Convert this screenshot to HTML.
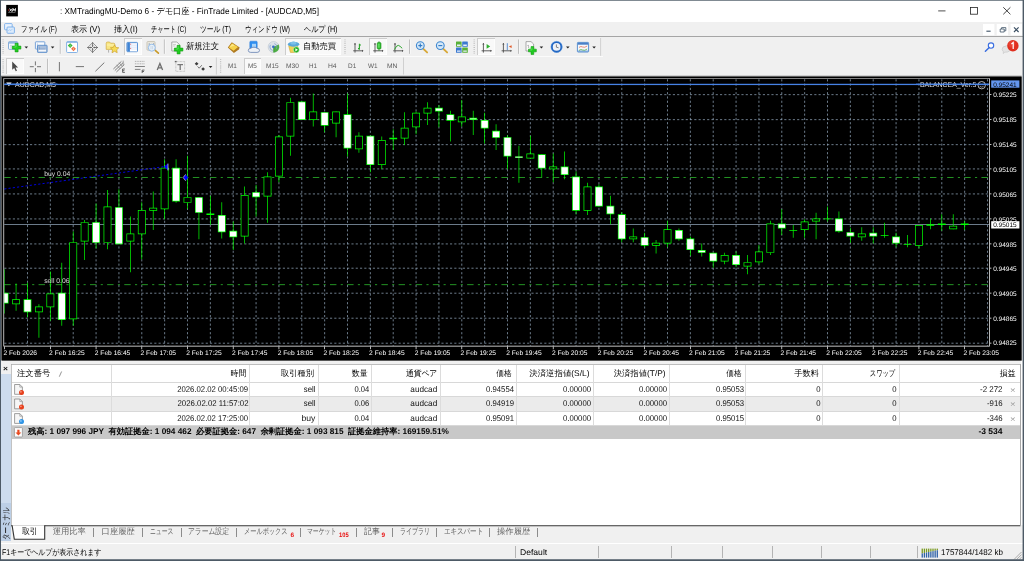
<!DOCTYPE html>
<html lang="ja"><head><meta charset="utf-8"><title>MT4</title>
<style>
html,body{margin:0;padding:0}
body{width:1024px;height:561px;overflow:hidden;position:relative;background:#f0f0f0;font-family:"Liberation Sans",sans-serif;text-rendering:geometricPrecision}
.t{position:absolute;white-space:nowrap;display:block}
.t i{display:inline-block;width:1em;text-align:center;font-style:normal;overflow:visible}
.b{position:absolute}
svg{position:absolute;left:0;top:0;overflow:visible}
#root{position:absolute;left:0;top:0;width:1024px;height:561px;overflow:hidden;will-change:transform}
svg text{font-family:"Liberation Sans",sans-serif;text-rendering:geometricPrecision}
</style></head><body><div id="root">
<div class="b" style="left:0.00px;top:0.00px;width:1024.00px;height:22.20px;background:#fff;"></div>
<div class="b" style="left:0.00px;top:22.20px;width:1024.00px;height:14.20px;background:#f0f0f0;"></div>
<div class="b" style="left:0.00px;top:36.20px;width:1024.00px;height:0.80px;background:#a5a5a5;"></div>
<div class="b" style="left:0.00px;top:37.00px;width:1024.00px;height:38.80px;background:#f0f0f0;"></div>
<div class="b" style="left:0.00px;top:55.90px;width:603.00px;height:0.70px;background:#fbfbfb;"></div>
<div class="b" style="left:0.00px;top:75.00px;width:1024.00px;height:0.70px;background:#fdfdfd;"></div>
<span class="t" id="t1" style="font-size:8.57px;color:#000;top:6.26px;line-height:10.28px;left:59.60px;transform-origin:0 50%;transform:scaleX(0.964);">: XMTradingMU-Demo 6 - <i>デ</i><i>モ</i><i>口</i><i>座</i> - FinTrade Limited - [AUDCAD,M5]</span>
<span class="t" id="t2" style="font-size:8.57px;color:#000;top:23.86px;line-height:10.28px;left:20.60px;transform-origin:0 50%;transform:scaleX(0.755);"><i>フ</i><i>ァ</i><i>イ</i><i>ル</i> (F)</span>
<span class="t" id="t3" style="font-size:8.57px;color:#000;top:23.86px;line-height:10.28px;left:70.60px;transform-origin:0 50%;transform:scaleX(0.944);"><i>表</i><i>示</i> (V)</span>
<span class="t" id="t4" style="font-size:8.57px;color:#000;top:23.86px;line-height:10.28px;left:113.80px;transform-origin:0 50%;transform:scaleX(0.936);"><i>挿</i><i>入</i>(I)</span>
<span class="t" id="t5" style="font-size:8.57px;color:#000;top:23.86px;line-height:10.28px;left:151.30px;transform-origin:0 50%;transform:scaleX(0.726);"><i>チ</i><i>ャ</i><i>ー</i><i>ト</i> (C)</span>
<span class="t" id="t6" style="font-size:8.57px;color:#000;top:23.86px;line-height:10.28px;left:200.00px;transform-origin:0 50%;transform:scaleX(0.795);"><i>ツ</i><i>ー</i><i>ル</i> (T)</span>
<span class="t" id="t7" style="font-size:8.57px;color:#000;top:23.86px;line-height:10.28px;left:245.00px;transform-origin:0 50%;transform:scaleX(0.763);"><i>ウ</i><i>ィ</i><i>ン</i><i>ド</i><i>ウ</i> (W)</span>
<span class="t" id="t8" style="font-size:8.57px;color:#000;top:23.86px;line-height:10.28px;left:304.00px;transform-origin:0 50%;transform:scaleX(0.838);"><i>ヘ</i><i>ル</i><i>プ</i> (H)</span>
<div class="b" style="left:123.60px;top:38.30px;width:18.00px;height:16.30px;background:#f9f9f9;box-shadow:inset 1px 1px 0 #cdcdcd, inset -0.7px -0.7px 0 #fff;"></div>
<div class="b" style="left:285.00px;top:38.30px;width:55.90px;height:16.50px;background:#f9f9f9;box-shadow:inset 1px 1px 0 #cdcdcd, inset -0.7px -0.7px 0 #fff;"></div>
<div class="b" style="left:368.60px;top:38.30px;width:18.00px;height:16.30px;background:#f9f9f9;box-shadow:inset 1px 1px 0 #cdcdcd, inset -0.7px -0.7px 0 #fff;"></div>
<div class="b" style="left:477.40px;top:38.30px;width:17.80px;height:16.30px;background:#f9f9f9;box-shadow:inset 1px 1px 0 #cdcdcd, inset -0.7px -0.7px 0 #fff;"></div>
<div class="b" style="left:6.10px;top:57.80px;width:18.00px;height:16.40px;background:#f9f9f9;box-shadow:inset 1px 1px 0 #cdcdcd, inset -0.7px -0.7px 0 #fff;"></div>
<div class="b" style="left:243.60px;top:58.20px;width:17.70px;height:16.00px;background:#f9f9f9;box-shadow:inset 1px 1px 0 #cdcdcd, inset -0.7px -0.7px 0 #fff;"></div>
<span class="t" id="t9" style="font-size:8.57px;color:#000;top:41.16px;line-height:10.28px;left:185.70px;transform-origin:0 50%;transform:scaleX(0.964);"><i>新</i><i>規</i><i>注</i><i>文</i></span>
<span class="t" id="t10" style="font-size:8.57px;color:#000;top:41.26px;line-height:10.28px;left:303.00px;transform-origin:0 50%;transform:scaleX(0.964);"><i>自</i><i>動</i><i>売</i><i>買</i></span>
<span class="t" id="t11" style="font-size:6.5px;color:#5a5a5a;top:62.70px;line-height:7.80px;left:227.60px;transform-origin:0 50%;transform:scaleX(0.985);">M1</span>
<span class="t" id="t12" style="font-size:6.5px;color:#5a5a5a;top:62.70px;line-height:7.80px;left:247.90px;transform-origin:0 50%;transform:scaleX(0.985);">M5</span>
<span class="t" id="t13" style="font-size:6.5px;color:#5a5a5a;top:62.70px;line-height:7.80px;left:266.00px;transform-origin:0 50%;">M15</span>
<span class="t" id="t14" style="font-size:6.5px;color:#5a5a5a;top:62.70px;line-height:7.80px;left:285.90px;transform-origin:0 50%;transform:scaleX(1.019);">M30</span>
<span class="t" id="t15" style="font-size:6.5px;color:#5a5a5a;top:62.70px;line-height:7.80px;left:308.50px;transform-origin:0 50%;transform:scaleX(0.962);">H1</span>
<span class="t" id="t16" style="font-size:6.5px;color:#5a5a5a;top:62.70px;line-height:7.80px;left:327.80px;transform-origin:0 50%;transform:scaleX(1.035);">H4</span>
<span class="t" id="t17" style="font-size:6.5px;color:#5a5a5a;top:62.70px;line-height:7.80px;left:347.90px;transform-origin:0 50%;transform:scaleX(0.986);">D1</span>
<span class="t" id="t18" style="font-size:6.5px;color:#5a5a5a;top:62.70px;line-height:7.80px;left:368.20px;transform-origin:0 50%;transform:scaleX(0.985);">W1</span>
<span class="t" id="t19" style="font-size:6.5px;color:#5a5a5a;top:62.70px;line-height:7.80px;left:387.00px;transform-origin:0 50%;transform:scaleX(1.029);">MN</span>
<svg width="1024" height="80" viewBox="0 0 1024 80">
<rect x="6.2" y="4.9" width="11.7" height="11.5" fill="#000"/>
<path d="M9.6 8.5l2 3M12.3 8.5l-3 3M12.4 11.5l0.7-3l0.9 2.1l1.5-2.1l-0.3 3" stroke="#f4f4f4" stroke-width="0.95" fill="none" stroke-linejoin="round"/><path d="M8 9.2l1.1 0.8l-1.1 0.9z" fill="#e02020"/><rect x="8.2" y="12.2" width="7.2" height="0.6" fill="#9a9a9a"/>
<path d="M938.2 10.9h7.3" stroke="#222" stroke-width="0.8"/>
<rect x="970.5" y="7.4" width="7" height="6.8" fill="none" stroke="#222" stroke-width="0.8"/>
<path d="M1003.3 7.3l7.1 7M1010.4 7.3l-7.1 7" stroke="#222" stroke-width="0.85"/>
<rect x="983" y="24" width="11.4" height="11.2" fill="#fff"/>
<rect x="996.7" y="24" width="11.4" height="11.2" fill="#fff"/>
<rect x="1010.6" y="24" width="11.4" height="11.2" fill="#fff"/>
<path d="M986.4 31.2h4.2" stroke="#3c5064" stroke-width="1.1"/>
<path d="M1000.2 29h4v3h-4zM1001.6 29v-1.4h4.2v3.2h-1.4" stroke="#3c5064" stroke-width="0.8" fill="none"/>
<path d="M1014 27.4l4.6 4.6M1018.6 27.4l-4.6 4.6" stroke="#3c5064" stroke-width="1.2"/>
<rect x="4.6" y="23.6" width="7.6" height="6.2" rx="0.8" fill="#eaf3fd" stroke="#6aa5e8" stroke-width="0.8"/><rect x="7" y="27" width="7.4" height="6.3" rx="0.8" fill="#dcebfb" stroke="#6aa5e8" stroke-width="0.8"/><path d="M8.2 31l1.4-1.4l1.2 1l1.8-1.8" stroke="#8ab8ee" stroke-width="0.6" fill="none"/>
<path d="M3.1 39.5V54" stroke="#b8b8b8" stroke-width="1.3" stroke-dasharray="0.8 1.1"/>
<path d="M3.1 59V73" stroke="#b8b8b8" stroke-width="1.3" stroke-dasharray="0.8 1.1"/>
<path d="M345 39.5V54" stroke="#b8b8b8" stroke-width="1.3" stroke-dasharray="0.8 1.1"/>
<path d="M474.2 39.5V54" stroke="#b8b8b8" stroke-width="1.3" stroke-dasharray="0.8 1.1"/>
<path d="M220.6 59V73" stroke="#b8b8b8" stroke-width="1.3" stroke-dasharray="0.8 1.1"/>
<path d="M60.3 39.5V53.8" stroke="#a8a8a8" stroke-width="0.8"/><path d="M61.099999999999994 39.5V53.8" stroke="#fff" stroke-width="0.6"/>
<path d="M164.4 39.5V53.8" stroke="#a8a8a8" stroke-width="0.8"/><path d="M165.20000000000002 39.5V53.8" stroke="#fff" stroke-width="0.6"/>
<path d="M409.5 39.5V53.8" stroke="#a8a8a8" stroke-width="0.8"/><path d="M410.3 39.5V53.8" stroke="#fff" stroke-width="0.6"/>
<path d="M518.5 39.5V53.8" stroke="#a8a8a8" stroke-width="0.8"/><path d="M519.3 39.5V53.8" stroke="#fff" stroke-width="0.6"/>
<path d="M47.6 58.8V73.4" stroke="#a8a8a8" stroke-width="0.8"/><path d="M48.4 58.8V73.4" stroke="#fff" stroke-width="0.6"/>
<path d="M600.6 38v17.8" stroke="#c8c8c8" stroke-width="0.8"/><path d="M216.4 57.5v17" stroke="#c8c8c8" stroke-width="0.8"/><path d="M403.5 57.5v17" stroke="#c8c8c8" stroke-width="0.8"/>
<rect x="8.5" y="41.7" width="9.2" height="7.6" rx="0.8" fill="#f4f8fc" stroke="#6a9ad0" stroke-width="0.8"/><rect x="8.9" y="42.1" width="8.4" height="1.5" fill="#8ab4e2"/><path d="M10 45.4h2.4M10 47h2.4" stroke="#9ab0c8" stroke-width="0.5"/>
<path d="M15.100000000000001 43.300000000000004h3.0v2.8h2.8v3.0h-2.8v2.8h-3.0v-2.8h-2.8v-3.0h2.8z" fill="#1fcc1f" stroke="#0f9a0f" stroke-width="0.6"/><path d="M16.1 44.2v2.8h-2.4" stroke="#8cf08c" stroke-width="0.6" fill="none" opacity="0.8"/>
<path d="M24.5 46.4h3.6l-1.8 2.1z" fill="#222"/>
<rect x="35.4" y="41.8" width="9.4" height="7.2" rx="0.5" fill="#fafcfe" stroke="#5a8fd0" stroke-width="0.8"/><path d="M37.4 43.4v4.6M36.8 47h6.2" stroke="#7a9cc8" stroke-width="0.5" fill="none"/><rect x="37.5" y="45.3" width="9.6" height="7.1" rx="0.5" fill="#a9bfdc" stroke="#4f86c8" stroke-width="0.8"/><rect x="38.6" y="49.6" width="7.4" height="1.9" fill="#f4f7fb"/><path d="M39.4 46.6v3M39 49h6.4" stroke="#6f8fb8" stroke-width="0.5" fill="none"/>
<path d="M50.8 46.4h3.6l-1.8 2.1z" fill="#222"/>
<rect x="66.6" y="41.7" width="10.9" height="10.8" rx="0.9" fill="#fff" stroke="#78aae2" stroke-width="0.9"/><path d="M66.8 42.2h10.5" stroke="#6aa0e0" stroke-width="0.9"/><path d="M70.2 43.2l2.4 2.4l-2.4 2.4l-2.4-2.4z" fill="#35b835"/><path d="M73.5 46.4l2.4 2.4l-2.4 2.4l-2.4-2.4z" fill="#f07040"/><path d="M70.2 44.6v2M73.5 47.8v2" stroke="#fff" stroke-width="0.5" opacity="0.8"/>
<path d="M92.6 42.6l4.9 4.9l-4.9 4.9l-4.9-4.9z" fill="none" stroke="#6e6e6e" stroke-width="0.7"/><path d="M92.6 42.2v4.3M92.6 48.5v4.3M87.3 47.5h4.3M93.6 47.5h4.3" stroke="#5a5a5a" stroke-width="0.8"/><path d="M92.6 46.9l-0.9-1.5h1.8zM92.6 48.1l-0.9 1.5h1.8zM92 47.5l-1.5-0.9v1.8zM93.2 47.5l1.5-0.9v1.8z" fill="#5a5a5a"/>
<path d="M106.2 43.4q0-1.4 1.4-1.4h2l1 1.2h3q1.2 0 1.2 1.2v5h-8.6z" fill="#f8e684" stroke="#c8a030" stroke-width="0.6"/><path d="M106.8 45h7.4" stroke="#fdf6c0" stroke-width="0.8"/><path d="M108.6 50v2.6" stroke="#b0b0b0" stroke-width="1"/>
<path d="M114.6 44.8l1.3 2.6l2.9 0.4l-2.1 2l0.5 2.9l-2.6-1.4l-2.6 1.4l0.5-2.9l-2.1-2l2.9-0.4z" fill="#f6dc58" stroke="#c89820" stroke-width="0.6"/>
<rect x="126.9" y="42.4" width="10.6" height="9.3" rx="0.7" fill="#e6ecfa" stroke="#4a88d0" stroke-width="0.9"/><rect x="130" y="49.6" width="7" height="1.7" fill="#fff"/><rect x="127.3" y="42.8" width="2.6" height="8.5" fill="#3f84d4"/><path d="M130.2 44.2h0.9M130.2 48.4h0.9" stroke="#e04040" stroke-width="0.8"/><path d="M131.6 44.4h5M131.6 46.4h5M131.6 48.4h5" stroke="#fff" stroke-width="0.5"/>
<rect x="147" y="41.6" width="8" height="8.6" rx="0.8" fill="#eeebe2" stroke="#b8b2a0" stroke-width="0.7"/><path d="M149.2 43.2v2M153.6 43.2v2" stroke="#7890b0" stroke-width="0.8"/><path d="M155.2 50.3l3.2 2.9" stroke="#c89a28" stroke-width="1.6" stroke-linecap="round"/><circle cx="151.8" cy="47.7" r="3.5" fill="#e6f1fb" fill-opacity="0.92" stroke="#8fb8e8" stroke-width="0.9"/><path d="M151 46v3.2M152.6 46v3.2" stroke="#b8c8d8" stroke-width="0.6"/>
<path d="M171.8 42h5l2.6 2.4v6.6h-7.6z" fill="#fafafa" stroke="#8a8a8a" stroke-width="0.7"/><path d="M173 44.4h3M173 46h2.4" stroke="#aaa" stroke-width="0.6"/>
<path d="M177.1 45.300000000000004h3.0v2.8h2.8v3.0h-2.8v2.8h-3.0v-2.8h-2.8v-3.0h2.8z" fill="#1fcc1f" stroke="#0f9a0f" stroke-width="0.6"/><path d="M178.1 46.2v2.8h-2.4" stroke="#8cf08c" stroke-width="0.6" fill="none" opacity="0.8"/>
<path d="M227.8 47.6l4-5.4l7.9 5.2l-0.9 2.2l-4.9 3.5z" fill="#b07a20"/><path d="M228.8 47.4l3.2-4.2l6 3.9l-4.4 3.6z" fill="#f6d24a"/><path d="M229.6 47.2l2.6-3.2l2.4 1.6z" fill="#fbe88a"/>
<rect x="249.8" y="41.2" width="7.4" height="7.2" rx="0.9" fill="#2f8ef0" stroke="#2a78d8" stroke-width="0.5"/><rect x="252" y="43.8" width="4" height="3.2" fill="#a8d4fa"/>
<path d="M248.3 50.4q0-2.2 2.6-2.1q1-1.3 3-1.1q2-0.2 3 1.1q2.6-0.1 2.6 2.1q0 2-2.4 2h-6.4q-2.4 0-2.4-2z" fill="#eef1f6" stroke="#6480b0" stroke-width="0.8"/>
<circle cx="273.6" cy="47" r="5.5" fill="#dde3ea" stroke="#b4bec8" stroke-width="0.5"/><path d="M273.6 47L278.6 44.6A5.5 5.5 0 0 1 273.6 52.5z" fill="#4fb044"/><path d="M273.9 47v5.4" stroke="#3f9c38" stroke-width="1"/><circle cx="273.4" cy="47" r="3.5" fill="none" stroke="#7a9acc" stroke-width="0.7" stroke-dasharray="7 4" stroke-dashoffset="-6"/><circle cx="273.4" cy="46.8" r="1.4" fill="#3a6ec0"/>
<path d="M288.6 45.6h9.2l-1 6.8h-6.4z" fill="#f2d454" stroke="#c0982a" stroke-width="0.5"/><ellipse cx="293.6" cy="44.2" rx="5.7" ry="2.5" fill="#5aa8dc"/><ellipse cx="293.4" cy="43" rx="3" ry="1.6" fill="#7cc0ea"/><circle cx="296.3" cy="49.8" r="3" fill="#22b022" stroke="#e8f8e8" stroke-width="0.5"/><path d="M295.4 48.2l2.5 1.6l-2.5 1.6z" fill="#fff"/>
<path d="M355.0 43.2v9.4M353.2 50.800000000000004h9.8" stroke="#505050" stroke-width="0.9" fill="none"/><path d="M353.9 44.400000000000006l1.1-1.5l1.1 1.5zM362.0 49.7l1.5 1.1l-1.5 1.1z" fill="#505050"/>
<path d="M359.4 43.8v6M358 48.6h1.4M359.4 45h1.6" stroke="#2aa52a" stroke-width="1.1"/>
<path d="M375.0 43.2v9.4M373.2 50.800000000000004h9.8" stroke="#505050" stroke-width="0.9" fill="none"/><path d="M373.9 44.400000000000006l1.1-1.5l1.1 1.5zM382.0 49.7l1.5 1.1l-1.5 1.1z" fill="#505050"/>
<path d="M379 41.2v9.6" stroke="#1d8a1d" stroke-width="0.7"/><rect x="377.2" y="42.6" width="3.8" height="6.4" rx="0.9" fill="#2fbe2f" stroke="#1d8a1d" stroke-width="0.6"/><rect x="378.2" y="43.6" width="1.4" height="4.2" rx="0.6" fill="#66e066"/>
<path d="M395.0 43.2v9.4M393.2 50.800000000000004h9.8" stroke="#505050" stroke-width="0.9" fill="none"/><path d="M393.9 44.400000000000006l1.1-1.5l1.1 1.5zM402.0 49.7l1.5 1.1l-1.5 1.1z" fill="#505050"/>
<path d="M394.4 49.6q2.4-4.8 4-4.2q1.6 0.5 3.8 2.9" stroke="#2aa52a" stroke-width="1" fill="none"/>
<path d="M423.1 48.6l4 3.8" stroke="#d8a838" stroke-width="1.9" stroke-linecap="round"/><circle cx="420.3" cy="45.6" r="3.9" fill="#d4e8f8" stroke="#3f88d0" stroke-width="1.1"/><path d="M418.3 45.6h4" stroke="#2f78c4" stroke-width="1.1"/>
<path d="M420.3 43.6v4" stroke="#2f78c4" stroke-width="1.1"/>
<path d="M443.1 48.6l4 3.8" stroke="#d8a838" stroke-width="1.9" stroke-linecap="round"/><circle cx="440.3" cy="45.6" r="3.9" fill="#d4e8f8" stroke="#3f88d0" stroke-width="1.1"/><path d="M438.3 45.6h4" stroke="#2f78c4" stroke-width="1.1"/>
<rect x="456" y="41.5" width="5.6" height="5.3" rx="0.5" fill="#58b038"/><rect x="462.2" y="41.5" width="5.6" height="5.3" rx="0.5" fill="#3a78d0"/><rect x="456" y="47.4" width="5.6" height="5.3" rx="0.5" fill="#3a78d0"/><rect x="462.2" y="47.4" width="5.6" height="5.3" rx="0.5" fill="#58b038"/><path d="M457 44.6h3.6v1.4h-3.6zM463.2 44.6h3.6v1.4h-3.6zM457 50.4h3.6v1.4h-3.6zM463.2 50.4h3.6v1.4h-3.6z" fill="#e8f0fa"/>
<path d="M483.40000000000003 43.2v9.4M481.6 50.800000000000004h9.8" stroke="#505050" stroke-width="0.9" fill="none"/><path d="M482.3 44.400000000000006l1.1-1.5l1.1 1.5zM490.40000000000003 49.7l1.5 1.1l-1.5 1.1z" fill="#505050"/>
<path d="M486.6 44l3.6 2.4l-3.6 2.4z" fill="#30b030"/>
<path d="M503.40000000000003 43.2v9.4M501.6 50.800000000000004h9.8" stroke="#505050" stroke-width="0.9" fill="none"/><path d="M502.3 44.400000000000006l1.1-1.5l1.1 1.5zM510.40000000000003 49.7l1.5 1.1l-1.5 1.1z" fill="#505050"/>
<path d="M507.3 43.2v7" stroke="#3a78c8" stroke-width="0.8"/><path d="M511.6 45.2v2.8l-2.8-1.4z" fill="#e05828"/>
<path d="M526 41.6h5l2.6 2.4v7h-7.6z" fill="#fafafa" stroke="#8a8a8a" stroke-width="0.7"/><path d="M527.4 45.6q1.4-2 1.2 2.4" stroke="#888" stroke-width="0.6" fill="none"/>
<path d="M531.05 46.6h2.7v2.55h2.55v2.7h-2.55v2.55h-2.7v-2.55h-2.55v-2.7h2.55z" fill="#1fcc1f" stroke="#0f9a0f" stroke-width="0.6"/><path d="M531.9 47.5v2.55h-2.15" stroke="#8cf08c" stroke-width="0.6" fill="none" opacity="0.8"/>
<path d="M539.6 46.4h3.6l-1.8 2.1z" fill="#222"/>
<circle cx="556.6" cy="46.9" r="4.8" fill="#eef2f8" stroke="#1f63c0" stroke-width="1.9"/><circle cx="556.6" cy="46.9" r="5.6" fill="none" stroke="#5a98e0" stroke-width="0.5"/><path d="M556.4 44.4v2.8l2.2 0.6" stroke="#555" stroke-width="0.7" fill="none"/>
<path d="M566 46.4h3.6l-1.8 2.1z" fill="#222"/>
<rect x="577.4" y="42.4" width="11.2" height="9.6" rx="0.7" fill="#f6f8fb" stroke="#4a86cc" stroke-width="0.9"/><rect x="577.8" y="42.8" width="10.4" height="1.9" fill="#4a80c8"/><rect x="577.8" y="50.6" width="10.4" height="1.1" fill="#6a9cd8"/><path d="M579 47.4q2-1.6 3.6-0.4q2 1 4.6-1" stroke="#e06040" stroke-width="0.7" fill="none"/><path d="M579 50.4q2-1.6 3.6-0.4q2 1 4.6-1" stroke="#40a840" stroke-width="0.7" fill="none"/>
<path d="M592.3 46.4h3.6l-1.8 2.1z" fill="#222"/>
<circle cx="991" cy="45.6" r="2.7" fill="#fff" stroke="#3a6ee0" stroke-width="1.1"/><path d="M989 47.8l-3.6 3.4" stroke="#3a6ee0" stroke-width="1.5" stroke-linecap="round"/>
<path d="M1003 47q3.6-2.6 7.4 0.4q1.4 3-2.6 4.6l-3 0.2l-1.6 1.4l0.2-1.8q-2.4-2-0.4-4.8z" fill="#e4e4e4" stroke="#bcbcbc" stroke-width="0.5"/>
<circle cx="1012.9" cy="45.7" r="5.7" fill="#e03020"/><circle cx="1011.8" cy="44.2" r="3.4" fill="#f05040" opacity="0.5"/>
<path d="M1011.4 44l1.8-1.4v6.4" stroke="#fff" stroke-width="1.2" fill="none"/>
<path d="M12.2 61.4v8.4l2-1.8l1.5 3.3l1.3-0.6l-1.5-3.2h2.6z" fill="#4a4a4a"/>
<path d="M35.4 61.4v4M35.4 68v4.2M29.8 66.7h4M37 66.7h4" stroke="#666" stroke-width="0.9"/>
<path d="M59.4 62v9.3" stroke="#666" stroke-width="0.9"/><path d="M75.8 66.6h8.2" stroke="#666" stroke-width="0.9"/><path d="M95.4 71.3l8.9-8.7" stroke="#666" stroke-width="0.9"/>
<path d="M113.4 69l8-7.6M114.8 70.6l8.4-8M116.4 72l8-7.6" stroke="#666" stroke-width="0.8" fill="none"/><path d="M116.6 64.8l3.4 4M119 62.6l3.2 3.8M123.2 60.6v5" stroke="#777" stroke-width="0.6" fill="none"/><path d="M124.9 69h-2.3v3.4h2.3M122.6 70.7h1.8" stroke="#444" stroke-width="0.8" fill="none"/>
<path d="M134.9 61.4h10M134.9 63.8h10" stroke="#9a9a9a" stroke-width="0.7" stroke-dasharray="1.1 0.6"/><path d="M134.9 66.5h10M134.9 69.4h5.6" stroke="#666" stroke-width="0.8"/><path d="M144.5 70.1h-2.3v2.9M142.2 71.5h1.8" stroke="#444" stroke-width="0.8" fill="none"/>
<path d="M157.2 69.9l2.7-6.4l2.7 6.4M158.2 67.8h3.4" stroke="#6e6e6e" stroke-width="1.3" fill="none"/>
<rect x="175.8" y="61.6" width="8.8" height="9.8" fill="none" stroke="#aaa" stroke-width="0.7" stroke-dasharray="0.8 0.6"/><path d="M177.4 64.6h5.6M180.2 64.6v5.4" stroke="#777" stroke-width="1.3"/><rect x="174.8" y="60.9" width="1.8" height="1.4" fill="#666"/>
<path d="M196.6 62l1.9 1.7l-1.9 1.7l-1.9-1.7z M203.1 67.3l1.9 1.7l-1.9 1.7l-1.9-1.7z" fill="#3c3c3c"/><path d="M197.6 66.4l1.6 1.8l2.6-3" stroke="#555" stroke-width="0.8" fill="none"/>
<path d="M208.8 66h3.6l-1.8 2.1z" fill="#222"/>
</svg>
<svg width="1024" height="561" viewBox="0 0 1024 561">
<rect x="1" y="75.7" width="1020.8" height="284.8" fill="#696969"/>
<rect x="1.9" y="76.9" width="1019.9" height="283.6" fill="#000"/>
<rect x="1021.8" y="75.7" width="0.9" height="285.5" fill="#fafafa"/>
<g transform="scale(0.7142857)">
<path d="M38.5 111V484 M70.5 111V484 M102.5 111V484 M134.5 111V484 M166.5 111V484 M198.5 111V484 M230.5 111V484 M262.5 111V484 M294.5 111V484 M326.5 111V484 M358.5 111V484 M390.5 111V484 M422.5 111V484 M454.5 111V484 M486.5 111V484 M518.5 111V484 M550.5 111V484 M582.5 111V484 M614.5 111V484 M646.5 111V484 M678.5 111V484 M710.5 111V484 M742.5 111V484 M774.5 111V484 M806.5 111V484 M838.5 111V484 M870.5 111V484 M902.5 111V484 M934.5 111V484 M966.5 111V484 M998.5 111V484 M1030.5 111V484 M1062.5 111V484 M1094.5 111V484 M1126.5 111V484 M1158.5 111V484 M1190.5 111V484 M1222.5 111V484 M1254.5 111V484 M1286.5 111V484 M1318.5 111V484 M1350.5 111V484 M1382.5 111V484 M6 132.5H1385 M6 167.5H1385 M6 202.5H1385 M6 236.5H1385 M6 271.5H1385 M6 306.5H1385 M6 341.5H1385 M6 375.5H1385 M6 410.5H1385 M6 445.5H1385 M6 480.5H1385" stroke="#98adc2" stroke-width="1" stroke-dasharray="3 3" fill="none"/>
<rect x="6" y="314" width="1379" height="1" fill="#98adc2"/>
<path d="M6 248.5H1385" stroke="#32cd32" stroke-width="1" stroke-dasharray="9 6 3 6" fill="none"/>
<path d="M6 398.5H1385" stroke="#32cd32" stroke-width="1" stroke-dasharray="9 6 3 6" fill="none"/>
<clipPath id="cp"><rect x="6" y="111" width="1379" height="373"/></clipPath><g clip-path="url(#cp)">
<path d="M6 377h1V439h-1zM22 397h1V435h-1zM38 396h1V444h-1zM54 426h1V473h-1zM70 380h1V449h-1zM86 368h1V456h-1zM102 324h1V456h-1zM118 308h1V364h-1zM134 285h1V348h-1zM150 266h1V349h-1zM166 265h1V342h-1zM182 303h1V381h-1zM198 283h1V363h-1zM214 268h1V322h-1zM230 223h1V307h-1zM246 223h1V284h-1zM262 218h1V293h-1zM278 276h1V335h-1zM294 274h1V315h-1zM310 283h1V334h-1zM326 310h1V350h-1zM342 261h1V341h-1zM358 259h1V303h-1zM374 241h1V312h-1zM390 189h1V255h-1zM406 137h1V218h-1zM422 142h1V168h-1zM438 131h1V177h-1zM454 157h1V185h-1zM470 156h1V192h-1zM486 131h1V219h-1zM502 185h1V214h-1zM518 190h1V241h-1zM534 191h1V237h-1zM550 181h1V210h-1zM566 157h1V203h-1zM582 156h1V188h-1zM598 143h1V175h-1zM614 147h1V178h-1zM630 155h1V198h-1zM646 140h1V177h-1zM662 155h1V189h-1zM678 158h1V201h-1zM694 174h1V210h-1zM710 189h1V237h-1zM726 204h1V256h-1zM742 190h1V222h-1zM758 216h1V248h-1zM774 215h1V255h-1zM790 212h1V251h-1zM806 240h1V300h-1zM822 256h1V301h-1zM838 258h1V289h-1zM854 274h1V314h-1zM870 297h1V339h-1zM886 320h1V339h-1zM902 326h1V347h-1zM918 336h1V355h-1zM934 309h1V346h-1zM950 320h1V337h-1zM966 331h1V358h-1zM982 341h1V359h-1zM998 354h1V375h-1zM1014 354h1V370h-1zM1030 352h1V374h-1zM1046 357h1V384h-1zM1062 343h1V370h-1zM1078 309h1V357h-1zM1094 293h1V329h-1zM1110 315h1V333h-1zM1126 307h1V333h-1zM1142 298h1V335h-1zM1158 289h1V310h-1zM1174 296h1V326h-1zM1190 319h1V340h-1zM1206 318h1V337h-1zM1222 318h1V341h-1zM1238 312h1V333h-1zM1254 326h1V346h-1zM1270 329h1V346h-1zM1286 315h1V348h-1zM1302 306h1V321h-1zM1318 300h1V323h-1zM1334 300h1V321h-1zM1350 309h1V322h-1z" fill="#00ff00"/>
<path d="M1 410h11V425h-11zM17 419h11V426h-11zM33 419h11V437h-11zM49 429h11V437h-11zM65 411h11V430h-11zM81 410h11V448h-11zM97 339h11V447h-11zM113 311h11V338h-11zM129 311h11V340h-11zM145 289h11V340h-11zM161 290h11V342h-11zM177 327h11V338h-11zM193 294h11V328h-11zM209 291h11V295h-11zM225 235h11V293h-11zM241 235h11V282h-11zM257 276h11V284h-11zM273 276h11V298h-11zM289 299h11V301h-11zM305 301h11V325h-11zM321 323h11V332h-11zM337 273h11V331h-11zM353 269h11V276h-11zM369 247h11V275h-11zM385 191h11V247h-11zM401 143h11V191h-11zM417 142h11V168h-11zM433 156h11V168h-11zM449 157h11V176h-11zM465 156h11V173h-11zM481 160h11V208h-11zM497 190h11V209h-11zM513 190h11V231h-11zM529 196h11V231h-11zM545 193h11V195h-11zM561 179h11V194h-11zM577 158h11V178h-11zM593 151h11V159h-11zM609 151h11V156h-11zM625 160h11V169h-11zM641 163h11V171h-11zM657 165h11V168h-11zM673 168h11V180h-11zM689 183h11V193h-11zM705 192h11V219h-11zM721 219h11V221h-11zM737 215h11V222h-11zM753 216h11V236h-11zM769 233h11V237h-11zM785 233h11V245h-11zM801 247h11V295h-11zM817 261h11V295h-11zM833 261h11V289h-11zM849 288h11V300h-11zM865 300h11V335h-11zM881 331h11V335h-11zM897 332h11V344h-11zM913 340h11V344h-11zM929 321h11V341h-11zM945 322h11V335h-11zM961 334h11V350h-11zM977 350h11V354h-11zM993 354h11V366h-11zM1009 357h11V366h-11zM1025 357h11V371h-11zM1041 367h11V373h-11zM1057 352h11V367h-11zM1073 313h11V354h-11zM1089 313h11V320h-11zM1105 322h11V323h-11zM1121 310h11V322h-11zM1137 306h11V310h-11zM1153 306h11V307h-11zM1169 306h11V324h-11zM1185 325h11V331h-11zM1201 327h11V332h-11zM1217 326h11V331h-11zM1233 329h11V330h-11zM1249 331h11V341h-11zM1265 342h11V343h-11zM1281 315h11V344h-11zM1297 314h11V316h-11zM1313 313h11V315h-11zM1329 316h11V321h-11zM1345 313h11V315h-11z" fill="#00ff00"/>
<path d="M18 420h9V425h-9zM50 430h9V436h-9zM66 412h9V429h-9zM98 340h9V446h-9zM114 312h9V337h-9zM146 290h9V339h-9zM178 328h9V337h-9zM194 295h9V327h-9zM210 292h9V294h-9zM226 236h9V292h-9zM258 277h9V283h-9zM338 274h9V330h-9zM370 248h9V274h-9zM386 192h9V246h-9zM402 144h9V190h-9zM434 157h9V167h-9zM466 157h9V172h-9zM498 191h9V208h-9zM530 197h9V230h-9zM562 180h9V193h-9zM578 159h9V177h-9zM594 152h9V158h-9zM642 164h9V170h-9zM738 216h9V221h-9zM770 234h9V236h-9zM818 262h9V294h-9zM882 332h9V334h-9zM914 341h9V343h-9zM930 322h9V340h-9zM1010 358h9V365h-9zM1042 368h9V372h-9zM1058 353h9V366h-9zM1074 314h9V353h-9zM1122 311h9V321h-9zM1138 307h9V309h-9zM1202 328h9V331h-9zM1282 316h9V343h-9zM1330 317h9V320h-9z" fill="#000"/>
<path d="M2 411h9V424h-9zM34 420h9V436h-9zM82 411h9V447h-9zM130 312h9V339h-9zM162 291h9V341h-9zM242 236h9V281h-9zM274 277h9V297h-9zM306 302h9V324h-9zM322 324h9V331h-9zM354 270h9V275h-9zM418 143h9V167h-9zM450 158h9V175h-9zM482 161h9V207h-9zM514 191h9V230h-9zM610 152h9V155h-9zM626 161h9V168h-9zM658 166h9V167h-9zM674 169h9V179h-9zM690 184h9V192h-9zM706 193h9V218h-9zM721.5 219.5h10V220.5h-10zM754 217h9V235h-9zM786 234h9V244h-9zM802 248h9V294h-9zM834 262h9V288h-9zM850 289h9V299h-9zM866 301h9V334h-9zM898 333h9V343h-9zM946 323h9V334h-9zM962 335h9V349h-9zM978 351h9V353h-9zM994 355h9V365h-9zM1026 358h9V370h-9zM1090 314h9V319h-9zM1170 307h9V323h-9zM1186 326h9V330h-9zM1218 327h9V330h-9zM1250 332h9V340h-9z" fill="#fff"/>
</g>
<path d="M6 264.6L232 233" stroke="#0000f0" stroke-width="1.3" stroke-dasharray="3 3" fill="none"/>
<path d="M229.6 233.6l5.4 -4.6v9.4z" fill="#0000ff"/><path d="M235.2 229v9.6" stroke="#fff" stroke-width="0.9"/>
<path d="M260 244.2l3.5 4.4l-3.5 4.4l-3.5 -4.4z" fill="#0000ff"/><path d="M260 244l-3.7 4.6l3.7 4.6" stroke="#fff" stroke-width="0.8" fill="none"/>
<rect x="6" y="117.3" width="1379" height="1.8" fill="#4682e6"/>
<path d="M4.8 109.4H1385.7V485H4.8z M5.8 110.4V484H1384.7V110.4z" fill="#fff" fill-rule="evenodd"/>
<path d="M1386 132h2v1h-2zM1386 167h2v1h-2zM1386 202h2v1h-2zM1386 236h2v1h-2zM1386 271h2v1h-2zM1386 306h2v1h-2zM1386 341h2v1h-2zM1386 375h2v1h-2zM1386 410h2v1h-2zM1386 445h2v1h-2zM1386 480h2v1h-2zM6 485h1v4h-1zM70 485h1v4h-1zM134 485h1v4h-1zM198 485h1v4h-1zM262 485h1v4h-1zM326 485h1v4h-1zM390 485h1v4h-1zM454 485h1v4h-1zM518 485h1v4h-1zM582 485h1v4h-1zM646 485h1v4h-1zM710 485h1v4h-1zM774 485h1v4h-1zM838 485h1v4h-1zM902 485h1v4h-1zM966 485h1v4h-1zM1030 485h1v4h-1zM1094 485h1v4h-1zM1158 485h1v4h-1zM1222 485h1v4h-1zM1286 485h1v4h-1zM1350 485h1v4h-1z" fill="#fff"/>
</g>
<text x="993.20" y="97.44" font-size="6.67" fill="#fff" text-anchor="start" style="font-size:6.5px">0.95225</text>
<text x="993.20" y="122.44" font-size="6.67" fill="#fff" text-anchor="start" style="font-size:6.5px">0.95185</text>
<text x="993.20" y="147.44" font-size="6.67" fill="#fff" text-anchor="start" style="font-size:6.5px">0.95145</text>
<text x="993.20" y="171.73" font-size="6.67" fill="#fff" text-anchor="start" style="font-size:6.5px">0.95105</text>
<text x="993.20" y="196.73" font-size="6.67" fill="#fff" text-anchor="start" style="font-size:6.5px">0.95065</text>
<text x="993.20" y="221.73" font-size="6.67" fill="#fff" text-anchor="start" style="font-size:6.5px">0.95025</text>
<text x="993.20" y="246.73" font-size="6.67" fill="#fff" text-anchor="start" style="font-size:6.5px">0.94985</text>
<text x="993.20" y="271.01" font-size="6.67" fill="#fff" text-anchor="start" style="font-size:6.5px">0.94945</text>
<text x="993.20" y="296.01" font-size="6.67" fill="#fff" text-anchor="start" style="font-size:6.5px">0.94905</text>
<text x="993.20" y="321.01" font-size="6.67" fill="#fff" text-anchor="start" style="font-size:6.5px">0.94865</text>
<text x="993.20" y="345.21" font-size="6.67" fill="#fff" text-anchor="start" style="font-size:6.5px">0.94825</text>
<rect x="991.2" y="221.2" width="28.2" height="7.3" fill="#fff"/>
<text x="993.20" y="227.35" font-size="6.67" fill="#000" text-anchor="start" style="font-size:6.5px">0.95015</text>
<rect x="991.2" y="80.4" width="28.2" height="7.3" fill="#6496ee"/>
<text x="993.20" y="86.65" font-size="6.67" fill="#000" text-anchor="start" style="font-size:6.5px">0.95241</text>
<text x="3.39" y="355.20" font-size="6.67" fill="#fff" text-anchor="start" >2 Feb 2026</text>
<text x="49.10" y="355.20" font-size="6.67" fill="#fff" text-anchor="start" >2 Feb 16:25</text>
<text x="94.81" y="355.20" font-size="6.67" fill="#fff" text-anchor="start" >2 Feb 16:45</text>
<text x="140.53" y="355.20" font-size="6.67" fill="#fff" text-anchor="start" >2 Feb 17:05</text>
<text x="186.24" y="355.20" font-size="6.67" fill="#fff" text-anchor="start" >2 Feb 17:25</text>
<text x="231.96" y="355.20" font-size="6.67" fill="#fff" text-anchor="start" >2 Feb 17:45</text>
<text x="277.67" y="355.20" font-size="6.67" fill="#fff" text-anchor="start" >2 Feb 18:05</text>
<text x="323.39" y="355.20" font-size="6.67" fill="#fff" text-anchor="start" >2 Feb 18:25</text>
<text x="369.10" y="355.20" font-size="6.67" fill="#fff" text-anchor="start" >2 Feb 18:45</text>
<text x="414.81" y="355.20" font-size="6.67" fill="#fff" text-anchor="start" >2 Feb 19:05</text>
<text x="460.53" y="355.20" font-size="6.67" fill="#fff" text-anchor="start" >2 Feb 19:25</text>
<text x="506.24" y="355.20" font-size="6.67" fill="#fff" text-anchor="start" >2 Feb 19:45</text>
<text x="551.96" y="355.20" font-size="6.67" fill="#fff" text-anchor="start" >2 Feb 20:05</text>
<text x="597.67" y="355.20" font-size="6.67" fill="#fff" text-anchor="start" >2 Feb 20:25</text>
<text x="643.39" y="355.20" font-size="6.67" fill="#fff" text-anchor="start" >2 Feb 20:45</text>
<text x="689.10" y="355.20" font-size="6.67" fill="#fff" text-anchor="start" >2 Feb 21:05</text>
<text x="734.81" y="355.20" font-size="6.67" fill="#fff" text-anchor="start" >2 Feb 21:25</text>
<text x="780.53" y="355.20" font-size="6.67" fill="#fff" text-anchor="start" >2 Feb 21:45</text>
<text x="826.24" y="355.20" font-size="6.67" fill="#fff" text-anchor="start" >2 Feb 22:05</text>
<text x="871.96" y="355.20" font-size="6.67" fill="#fff" text-anchor="start" >2 Feb 22:25</text>
<text x="917.67" y="355.20" font-size="6.67" fill="#fff" text-anchor="start" >2 Feb 22:45</text>
<text x="963.39" y="355.20" font-size="6.67" fill="#fff" text-anchor="start" >2 Feb 23:05</text>
<text x="15.00" y="86.70" font-size="6.67" fill="#e8e8e8" text-anchor="start" style="font-size:6.95px">AUDCAD,M5</text>
<path d="M6.2 82.5h5.4l-2.7 3.7z" fill="#fff"/>
<rect x="4.4" y="83.6" width="53" height="1.43" fill="#4682e6"/>
<text x="44.20" y="176.00" font-size="6.67" fill="#d8d8d8" text-anchor="start" style="font-size:6.8px">buy 0.04</text>
<text x="44.20" y="283.00" font-size="6.67" fill="#d8d8d8" text-anchor="start" style="font-size:6.8px">sell 0.06</text>
<text x="976.30" y="87.40" font-size="6.67" fill="#e0e0e0" text-anchor="end" style="font-size:6.9px">BALANCEA_Ver.5</text>
<circle cx="981.7" cy="85.2" r="3.7" fill="none" stroke="#ddd" stroke-width="0.8"/>
<path d="M979.8 86.3q1.9 1.7 3.8 0" fill="none" stroke="#ddd" stroke-width="0.6"/>
<rect x="916" y="83.6" width="73" height="1.43" fill="#4682e6" opacity="0.85"/>
</svg>
<div class="b" style="left:0.00px;top:360.60px;width:1024.00px;height:200.40px;background:#f0f0f0;"></div>
<div class="b" style="left:1.30px;top:374.40px;width:9.70px;height:167.00px;background:#cddcee;"></div>
<div class="b" style="left:1.30px;top:503.00px;width:9.70px;height:38.40px;background:#bccfe6;"></div>
<div class="b" style="left:11.40px;top:364.20px;width:1008.60px;height:161.20px;background:#fff;box-shadow:inset 0.7px 0.7px 0 #a8a8a8;"></div>
<div class="b" style="left:1020.00px;top:364.20px;width:0.70px;height:161.20px;background:#a8a8a8;"></div>
<div class="b" style="left:1020.70px;top:361.00px;width:2.00px;height:164.40px;background:#fff;"></div>
<div class="b" style="left:12.10px;top:396.80px;width:1007.90px;height:14.70px;background:#ebebeb;"></div>
<div class="b" style="left:12.10px;top:425.30px;width:1007.90px;height:13.70px;background:#c8c8c8;"></div>
<div class="b" style="left:12.10px;top:381.85px;width:1007.90px;height:0.70px;background:#d8d8d8;"></div>
<div class="b" style="left:12.10px;top:396.45px;width:1007.90px;height:0.70px;background:#d8d8d8;"></div>
<div class="b" style="left:12.10px;top:411.15px;width:1007.90px;height:0.70px;background:#d8d8d8;"></div>
<div class="b" style="left:12.10px;top:424.95px;width:1007.90px;height:0.70px;background:#d8d8d8;"></div>
<div class="b" style="left:110.85px;top:364.90px;width:0.70px;height:60.40px;background:#dcdcdc;"></div>
<div class="b" style="left:249.25px;top:364.90px;width:0.70px;height:60.40px;background:#dcdcdc;"></div>
<div class="b" style="left:317.95px;top:364.90px;width:0.70px;height:60.40px;background:#dcdcdc;"></div>
<div class="b" style="left:371.25px;top:364.90px;width:0.70px;height:60.40px;background:#dcdcdc;"></div>
<div class="b" style="left:439.85px;top:364.90px;width:0.70px;height:60.40px;background:#dcdcdc;"></div>
<div class="b" style="left:516.15px;top:364.90px;width:0.70px;height:60.40px;background:#dcdcdc;"></div>
<div class="b" style="left:592.75px;top:364.90px;width:0.70px;height:60.40px;background:#dcdcdc;"></div>
<div class="b" style="left:669.15px;top:364.90px;width:0.70px;height:60.40px;background:#dcdcdc;"></div>
<div class="b" style="left:745.35px;top:364.90px;width:0.70px;height:60.40px;background:#dcdcdc;"></div>
<div class="b" style="left:822.05px;top:364.90px;width:0.70px;height:60.40px;background:#dcdcdc;"></div>
<div class="b" style="left:898.65px;top:364.90px;width:0.70px;height:60.40px;background:#dcdcdc;"></div>
<span class="t" id="t20" style="font-size:8.3px;color:#000;top:368.52px;line-height:9.96px;left:16.90px;transform-origin:0 50%;transform:scaleX(1.009);"><i>注</i><i>文</i><i>番</i><i>号</i></span>
<span class="t" id="t21" style="font-size:8.3px;color:#000;top:368.52px;line-height:9.96px;right:777.40px;transform-origin:100% 50%;transform:scaleX(0.964);"><i>時</i><i>間</i></span>
<span class="t" id="t22" style="font-size:8.3px;color:#000;top:368.52px;line-height:9.96px;right:709.90px;transform-origin:100% 50%;transform:scaleX(1.009);"><i>取</i><i>引</i><i>種</i><i>別</i></span>
<span class="t" id="t23" style="font-size:8.3px;color:#000;top:368.52px;line-height:9.96px;right:656.60px;transform-origin:100% 50%;transform:scaleX(0.952);"><i>数</i><i>量</i></span>
<span class="t" id="t24" style="font-size:8.3px;color:#000;top:368.52px;line-height:9.96px;right:586.50px;transform-origin:100% 50%;transform:scaleX(0.943);"><i>通</i><i>貨</i><i>ペ</i><i>ア</i></span>
<span class="t" id="t25" style="font-size:8.3px;color:#000;top:368.52px;line-height:9.96px;right:512.60px;transform-origin:100% 50%;transform:scaleX(0.928);"><i>価</i><i>格</i></span>
<span class="t" id="t26" style="font-size:8.3px;color:#000;top:368.52px;line-height:9.96px;right:434.70px;transform-origin:100% 50%;transform:scaleX(1.011);"><i>決</i><i>済</i><i>逆</i><i>指</i><i>値</i>(S/L)</span>
<span class="t" id="t27" style="font-size:8.3px;color:#000;top:368.52px;line-height:9.96px;right:358.50px;transform-origin:100% 50%;transform:scaleX(1.007);"><i>決</i><i>済</i><i>指</i><i>値</i>(T/P)</span>
<span class="t" id="t28" style="font-size:8.3px;color:#000;top:368.52px;line-height:9.96px;right:282.90px;transform-origin:100% 50%;transform:scaleX(0.922);"><i>価</i><i>格</i></span>
<span class="t" id="t29" style="font-size:8.3px;color:#000;top:368.52px;line-height:9.96px;right:205.40px;transform-origin:100% 50%;transform:scaleX(0.988);"><i>手</i><i>数</i><i>料</i></span>
<span class="t" id="t30" style="font-size:8.3px;color:#000;top:368.52px;line-height:9.96px;right:128.50px;transform-origin:100% 50%;transform:scaleX(0.765);"><i>ス</i><i>ワ</i><i>ッ</i><i>プ</i></span>
<span class="t" id="t31" style="font-size:8.3px;color:#000;top:368.52px;line-height:9.96px;right:8.20px;transform-origin:100% 50%;transform:scaleX(0.952);"><i>損</i><i>益</i></span>
<span class="t" id="t32" style="font-size:8.3px;color:#111;top:384.72px;line-height:9.96px;right:775.50px;transform-origin:100% 50%;transform:scaleX(0.932);">2026.02.02 00:45:09</span>
<span class="t" id="t33" style="font-size:8.3px;color:#111;top:384.72px;line-height:9.96px;right:708.30px;transform-origin:100% 50%;transform:scaleX(0.940);">sell</span>
<span class="t" id="t34" style="font-size:8.3px;color:#111;top:384.72px;line-height:9.96px;right:654.60px;transform-origin:100% 50%;transform:scaleX(0.910);">0.04</span>
<span class="t" id="t35" style="font-size:8.3px;color:#111;top:384.72px;line-height:9.96px;right:586.40px;transform-origin:100% 50%;transform:scaleX(0.988);">audcad</span>
<span class="t" id="t36" style="font-size:8.3px;color:#111;top:384.72px;line-height:9.96px;right:510.00px;transform-origin:100% 50%;transform:scaleX(0.930);">0.94554</span>
<span class="t" id="t37" style="font-size:8.3px;color:#111;top:384.72px;line-height:9.96px;right:433.10px;transform-origin:100% 50%;transform:scaleX(0.930);">0.00000</span>
<span class="t" id="t38" style="font-size:8.3px;color:#111;top:384.72px;line-height:9.96px;right:356.60px;transform-origin:100% 50%;transform:scaleX(0.930);">0.00000</span>
<span class="t" id="t39" style="font-size:8.3px;color:#111;top:384.72px;line-height:9.96px;right:280.30px;transform-origin:100% 50%;transform:scaleX(0.930);">0.95053</span>
<span class="t" id="t40" style="font-size:8.3px;color:#111;top:384.72px;line-height:9.96px;right:203.70px;transform-origin:100% 50%;transform:scaleX(0.930);">0</span>
<span class="t" id="t41" style="font-size:8.3px;color:#111;top:384.72px;line-height:9.96px;right:127.50px;transform-origin:100% 50%;transform:scaleX(0.930);">0</span>
<span class="t" id="t42" style="font-size:8.3px;color:#111;top:384.72px;line-height:9.96px;right:21.00px;transform-origin:100% 50%;transform:scaleX(0.956);">-2 272</span>
<span class="t" id="t43" style="font-size:8.5px;color:#999;top:384.60px;line-height:10.20px;left:1009.60px;transform-origin:0 50%;transform:scaleX(1.127);">×</span>
<span class="t" id="t44" style="font-size:8.3px;color:#111;top:399.37px;line-height:9.96px;right:775.50px;transform-origin:100% 50%;transform:scaleX(0.940);">2026.02.02 11:57:02</span>
<span class="t" id="t45" style="font-size:8.3px;color:#111;top:399.37px;line-height:9.96px;right:708.30px;transform-origin:100% 50%;transform:scaleX(0.940);">sell</span>
<span class="t" id="t46" style="font-size:8.3px;color:#111;top:399.37px;line-height:9.96px;right:654.60px;transform-origin:100% 50%;transform:scaleX(0.910);">0.06</span>
<span class="t" id="t47" style="font-size:8.3px;color:#111;top:399.37px;line-height:9.96px;right:586.40px;transform-origin:100% 50%;transform:scaleX(0.988);">audcad</span>
<span class="t" id="t48" style="font-size:8.3px;color:#111;top:399.37px;line-height:9.96px;right:510.00px;transform-origin:100% 50%;transform:scaleX(0.930);">0.94919</span>
<span class="t" id="t49" style="font-size:8.3px;color:#111;top:399.37px;line-height:9.96px;right:433.10px;transform-origin:100% 50%;transform:scaleX(0.930);">0.00000</span>
<span class="t" id="t50" style="font-size:8.3px;color:#111;top:399.37px;line-height:9.96px;right:356.60px;transform-origin:100% 50%;transform:scaleX(0.930);">0.00000</span>
<span class="t" id="t51" style="font-size:8.3px;color:#111;top:399.37px;line-height:9.96px;right:280.30px;transform-origin:100% 50%;transform:scaleX(0.930);">0.95053</span>
<span class="t" id="t52" style="font-size:8.3px;color:#111;top:399.37px;line-height:9.96px;right:203.70px;transform-origin:100% 50%;transform:scaleX(0.930);">0</span>
<span class="t" id="t53" style="font-size:8.3px;color:#111;top:399.37px;line-height:9.96px;right:127.50px;transform-origin:100% 50%;transform:scaleX(0.930);">0</span>
<span class="t" id="t54" style="font-size:8.3px;color:#111;top:399.37px;line-height:9.96px;right:21.00px;transform-origin:100% 50%;transform:scaleX(0.939);">-916</span>
<span class="t" id="t55" style="font-size:8.5px;color:#999;top:399.25px;line-height:10.20px;left:1009.60px;transform-origin:0 50%;transform:scaleX(1.127);">×</span>
<span class="t" id="t56" style="font-size:8.3px;color:#111;top:413.62px;line-height:9.96px;right:775.50px;transform-origin:100% 50%;transform:scaleX(0.932);">2026.02.02 17:25:00</span>
<span class="t" id="t57" style="font-size:8.3px;color:#111;top:413.62px;line-height:9.96px;right:708.30px;transform-origin:100% 50%;transform:scaleX(1.038);">buy</span>
<span class="t" id="t58" style="font-size:8.3px;color:#111;top:413.62px;line-height:9.96px;right:654.60px;transform-origin:100% 50%;transform:scaleX(0.910);">0.04</span>
<span class="t" id="t59" style="font-size:8.3px;color:#111;top:413.62px;line-height:9.96px;right:586.40px;transform-origin:100% 50%;transform:scaleX(0.988);">audcad</span>
<span class="t" id="t60" style="font-size:8.3px;color:#111;top:413.62px;line-height:9.96px;right:510.00px;transform-origin:100% 50%;transform:scaleX(0.930);">0.95091</span>
<span class="t" id="t61" style="font-size:8.3px;color:#111;top:413.62px;line-height:9.96px;right:433.10px;transform-origin:100% 50%;transform:scaleX(0.930);">0.00000</span>
<span class="t" id="t62" style="font-size:8.3px;color:#111;top:413.62px;line-height:9.96px;right:356.60px;transform-origin:100% 50%;transform:scaleX(0.930);">0.00000</span>
<span class="t" id="t63" style="font-size:8.3px;color:#111;top:413.62px;line-height:9.96px;right:280.30px;transform-origin:100% 50%;transform:scaleX(0.930);">0.95015</span>
<span class="t" id="t64" style="font-size:8.3px;color:#111;top:413.62px;line-height:9.96px;right:203.70px;transform-origin:100% 50%;transform:scaleX(0.930);">0</span>
<span class="t" id="t65" style="font-size:8.3px;color:#111;top:413.62px;line-height:9.96px;right:127.50px;transform-origin:100% 50%;transform:scaleX(0.930);">0</span>
<span class="t" id="t66" style="font-size:8.3px;color:#111;top:413.62px;line-height:9.96px;right:21.00px;transform-origin:100% 50%;transform:scaleX(0.939);">-346</span>
<span class="t" id="t67" style="font-size:8.5px;color:#999;top:413.50px;line-height:10.20px;left:1009.60px;transform-origin:0 50%;transform:scaleX(1.127);">×</span>
<span class="t" id="t68" style="font-size:8.3px;color:#000;top:427.37px;line-height:9.96px;left:28.30px;transform-origin:0 50%;font-weight:bold;transform:scaleX(0.993);"><i>残</i><i>高</i>: 1 097 996 JPY&nbsp; <i>有</i><i>効</i><i>証</i><i>拠</i><i>金</i>: 1 094 462&nbsp; <i>必</i><i>要</i><i>証</i><i>拠</i><i>金</i>: 647&nbsp; <i>余</i><i>剰</i><i>証</i><i>拠</i><i>金</i>: 1 093 815&nbsp; <i>証</i><i>拠</i><i>金</i><i>維</i><i>持</i><i>率</i>: 169159.51%</span>
<span class="t" id="t69" style="font-size:8.3px;color:#000;top:427.37px;line-height:9.96px;right:21.40px;transform-origin:100% 50%;font-weight:bold;transform:scaleX(1.024);">-3 534</span>
<span class="t" id="t70" style="font-size:7.5px;color:#111;top:363.90px;line-height:9.00px;left:3.20px;transform-origin:0 50%;font-weight:bold;transform:scaleX(1.139);">×</span>
<svg width="1024" height="561" viewBox="0 0 1024 561"><path d="M11 525.8H1020.5" stroke="#3a3a3a" stroke-width="1.1"/><path d="M12.1 525.2L14.3 539.2H44.7V525.2z" fill="#fff"/><path d="M12.1 525.3L14.3 539.2H44.7V525.3" fill="none" stroke="#333" stroke-width="1.1"/></svg>
<span class="t" id="t71" style="font-size:8.3px;color:#000;top:527.02px;line-height:9.96px;left:21.60px;transform-origin:0 50%;transform:scaleX(0.940);"><i>取</i><i>引</i></span>
<span class="t" id="t72" style="font-size:8.3px;color:#646464;top:527.22px;line-height:9.96px;left:52.70px;transform-origin:0 50%;"><i>運</i><i>用</i><i>比</i><i>率</i></span>
<span class="t" id="t73" style="font-size:8.3px;color:#646464;top:527.22px;line-height:9.96px;left:101.60px;transform-origin:0 50%;"><i>口</i><i>座</i><i>履</i><i>歴</i></span>
<span class="t" id="t74" style="font-size:8.3px;color:#646464;top:527.22px;line-height:9.96px;left:150.00px;transform-origin:0 50%;transform:scaleX(0.705);"><i>ニ</i><i>ュ</i><i>ー</i><i>ス</i></span>
<span class="t" id="t75" style="font-size:8.3px;color:#646464;top:527.22px;line-height:9.96px;left:187.90px;transform-origin:0 50%;transform:scaleX(0.824);"><i>ア</i><i>ラ</i><i>ー</i><i>ム</i><i>設</i><i>定</i></span>
<span class="t" id="t76" style="font-size:8.3px;color:#646464;top:527.22px;line-height:9.96px;left:244.00px;transform-origin:0 50%;transform:scaleX(0.749);"><i>メ</i><i>ー</i><i>ル</i><i>ボ</i><i>ッ</i><i>ク</i><i>ス</i></span>
<span class="t" id="t77" style="font-size:8.3px;color:#646464;top:527.22px;line-height:9.96px;left:307.40px;transform-origin:0 50%;transform:scaleX(0.706);"><i>マ</i><i>ー</i><i>ケ</i><i>ッ</i><i>ト</i></span>
<span class="t" id="t78" style="font-size:8.3px;color:#646464;top:527.22px;line-height:9.96px;left:363.70px;transform-origin:0 50%;transform:scaleX(0.952);"><i>記</i><i>事</i></span>
<span class="t" id="t79" style="font-size:8.3px;color:#646464;top:527.22px;line-height:9.96px;left:400.20px;transform-origin:0 50%;transform:scaleX(0.726);"><i>ラ</i><i>イ</i><i>ブ</i><i>ラ</i><i>リ</i></span>
<span class="t" id="t80" style="font-size:8.3px;color:#646464;top:527.22px;line-height:9.96px;left:444.30px;transform-origin:0 50%;transform:scaleX(0.787);"><i>エ</i><i>キ</i><i>ス</i><i>パ</i><i>ー</i><i>ト</i></span>
<span class="t" id="t81" style="font-size:8.3px;color:#646464;top:527.22px;line-height:9.96px;left:496.60px;transform-origin:0 50%;transform:scaleX(1.006);"><i>操</i><i>作</i><i>履</i><i>歴</i></span>
<div class="b" style="left:93.40px;top:527.60px;width:0.80px;height:9.60px;background:#8c8c8c;"></div>
<div class="b" style="left:142.20px;top:527.60px;width:0.80px;height:9.60px;background:#8c8c8c;"></div>
<div class="b" style="left:180.90px;top:527.60px;width:0.80px;height:9.60px;background:#8c8c8c;"></div>
<div class="b" style="left:236.30px;top:527.60px;width:0.80px;height:9.60px;background:#8c8c8c;"></div>
<div class="b" style="left:300.20px;top:527.60px;width:0.80px;height:9.60px;background:#8c8c8c;"></div>
<div class="b" style="left:355.90px;top:527.60px;width:0.80px;height:9.60px;background:#8c8c8c;"></div>
<div class="b" style="left:392.00px;top:527.60px;width:0.80px;height:9.60px;background:#8c8c8c;"></div>
<div class="b" style="left:436.10px;top:527.60px;width:0.80px;height:9.60px;background:#8c8c8c;"></div>
<div class="b" style="left:489.10px;top:527.60px;width:0.80px;height:9.60px;background:#8c8c8c;"></div>
<div class="b" style="left:536.80px;top:527.60px;width:0.80px;height:9.60px;background:#8c8c8c;"></div>
<span class="t" id="t82" style="font-size:6.4px;color:#e81010;top:532.06px;line-height:7.68px;left:290.60px;transform-origin:0 50%;font-weight:bold;">6</span>
<span class="t" id="t83" style="font-size:6.4px;color:#e81010;top:532.06px;line-height:7.68px;left:338.80px;transform-origin:0 50%;font-weight:bold;transform:scaleX(0.900);">105</span>
<span class="t" id="t84" style="font-size:6.4px;color:#e81010;top:532.06px;line-height:7.68px;left:381.60px;transform-origin:0 50%;font-weight:bold;">9</span>
<span class="t" style="font-size:9px;color:#222;left:1.6px;top:540px;line-height:9.6px;transform-origin:0 0;transform:rotate(-90deg) scaleX(0.72);"><i>タ</i><i>ー</i><i>ミ</i><i>ナ</i><i>ル</i></span>
<div class="b" style="left:0.00px;top:543.00px;width:1024.00px;height:0.80px;background:#fff;"></div>
<span class="t" id="t85" style="font-size:8.3px;color:#000;top:548.22px;line-height:9.96px;left:2.40px;transform-origin:0 50%;transform:scaleX(0.844);">F1<i>キ</i><i>ー</i><i>で</i><i>ヘ</i><i>ル</i><i>プ</i><i>が</i><i>表</i><i>示</i><i>さ</i><i>れ</i><i>ま</i><i>す</i></span>
<span class="t" id="t86" style="font-size:8.3px;color:#000;top:548.22px;line-height:9.96px;left:519.80px;transform-origin:0 50%;transform:scaleX(1.034);">Default</span>
<span class="t" id="t87" style="font-size:8.3px;color:#000;top:548.22px;line-height:9.96px;left:941.20px;transform-origin:0 50%;transform:scaleX(0.965);">1757844/1482 kb</span>
<div class="b" style="left:515.30px;top:545.60px;width:0.80px;height:12.60px;background:#b4b4b4;"></div>
<div class="b" style="left:598.10px;top:545.60px;width:0.80px;height:12.60px;background:#b4b4b4;"></div>
<div class="b" style="left:671.20px;top:545.60px;width:0.80px;height:12.60px;background:#b4b4b4;"></div>
<div class="b" style="left:721.70px;top:545.60px;width:0.80px;height:12.60px;background:#b4b4b4;"></div>
<div class="b" style="left:771.70px;top:545.60px;width:0.80px;height:12.60px;background:#b4b4b4;"></div>
<div class="b" style="left:821.00px;top:545.60px;width:0.80px;height:12.60px;background:#b4b4b4;"></div>
<div class="b" style="left:870.20px;top:545.60px;width:0.80px;height:12.60px;background:#b4b4b4;"></div>
<div class="b" style="left:917.20px;top:545.60px;width:0.80px;height:12.60px;background:#b4b4b4;"></div>
<svg width="1024" height="561" viewBox="0 0 1024 561">
<rect x="921.60" y="548.6" width="1.3" height="4.80" fill="#7a9a20"/><rect x="921.60" y="553.40" width="1.3" height="4.20" fill="#2f62a8"/>
<rect x="923.75" y="548.6" width="1.3" height="4.35" fill="#7a9a20"/><rect x="923.75" y="552.95" width="1.3" height="4.65" fill="#2f62a8"/>
<rect x="925.90" y="548.6" width="1.3" height="3.90" fill="#7a9a20"/><rect x="925.90" y="552.50" width="1.3" height="5.10" fill="#2f62a8"/>
<rect x="928.05" y="548.6" width="1.3" height="3.45" fill="#7a9a20"/><rect x="928.05" y="552.05" width="1.3" height="5.55" fill="#2f62a8"/>
<rect x="930.20" y="548.6" width="1.3" height="3.00" fill="#7a9a20"/><rect x="930.20" y="551.60" width="1.3" height="6.00" fill="#2f62a8"/>
<rect x="932.35" y="548.6" width="1.3" height="2.55" fill="#7a9a20"/><rect x="932.35" y="551.15" width="1.3" height="6.45" fill="#2f62a8"/>
<rect x="934.50" y="548.6" width="1.3" height="2.10" fill="#7a9a20"/><rect x="934.50" y="550.70" width="1.3" height="6.90" fill="#2f62a8"/>
<rect x="936.65" y="548.6" width="1.3" height="1.65" fill="#7a9a20"/><rect x="936.65" y="550.25" width="1.3" height="7.35" fill="#2f62a8"/>
<path d="M59.3 376.7l2.3-5.2" stroke="#666" stroke-width="0.7"/>
<path d="M1014 559.5l7.5-7.5M1016.6 559.5l4.9-4.9M1019.2 559.5l2.3-2.3" stroke="#a0a0a0" stroke-width="0.9"/>
<path d="M14.6 384.5h5.2l2.6 2.6v7.2h-7.8z" fill="#f6f6f6" stroke="#888" stroke-width="0.8"/><path d="M19.8 384.5v2.6h2.6" fill="none" stroke="#888" stroke-width="0.6"/><circle cx="21.5" cy="392.5" r="2.5" fill="#e8401c"/><circle cx="20.9" cy="391.8" r="0.9" fill="#fff" opacity="0.45"/>
<path d="M14.6 399.0h5.2l2.6 2.6v7.2h-7.8z" fill="#f6f6f6" stroke="#888" stroke-width="0.8"/><path d="M19.8 399.0v2.6h2.6" fill="none" stroke="#888" stroke-width="0.6"/><circle cx="21.5" cy="407.0" r="2.5" fill="#e8401c"/><circle cx="20.9" cy="406.3" r="0.9" fill="#fff" opacity="0.45"/>
<path d="M14.6 413.6h5.2l2.6 2.6v7.2h-7.8z" fill="#f6f6f6" stroke="#888" stroke-width="0.8"/><path d="M19.8 413.6v2.6h2.6" fill="none" stroke="#888" stroke-width="0.6"/><circle cx="21.5" cy="421.6" r="2.5" fill="#2f96e8"/><circle cx="20.9" cy="420.90000000000003" r="0.9" fill="#fff" opacity="0.45"/>
<rect x="14.4" y="427.6" width="8" height="9.4" rx="0.8" fill="#fcfcfc" stroke="#8a8a8a" stroke-width="0.7"/><path d="M17.3 429.8h2.2v2.6h1.8l-2.9 3l-2.9-3h1.8z" fill="#e84a20"/>
<path d="M0.5 0V561" stroke="#4d5a66" stroke-width="1"/><path d="M1023.3 0V561" stroke="#4d5a66" stroke-width="1.4"/><path d="M0 0.4H1024" stroke="#4d5a66" stroke-width="0.8"/><path d="M0 560.15H1024" stroke="#4d5a66" stroke-width="1.7"/>
</svg>
</div></body></html>
